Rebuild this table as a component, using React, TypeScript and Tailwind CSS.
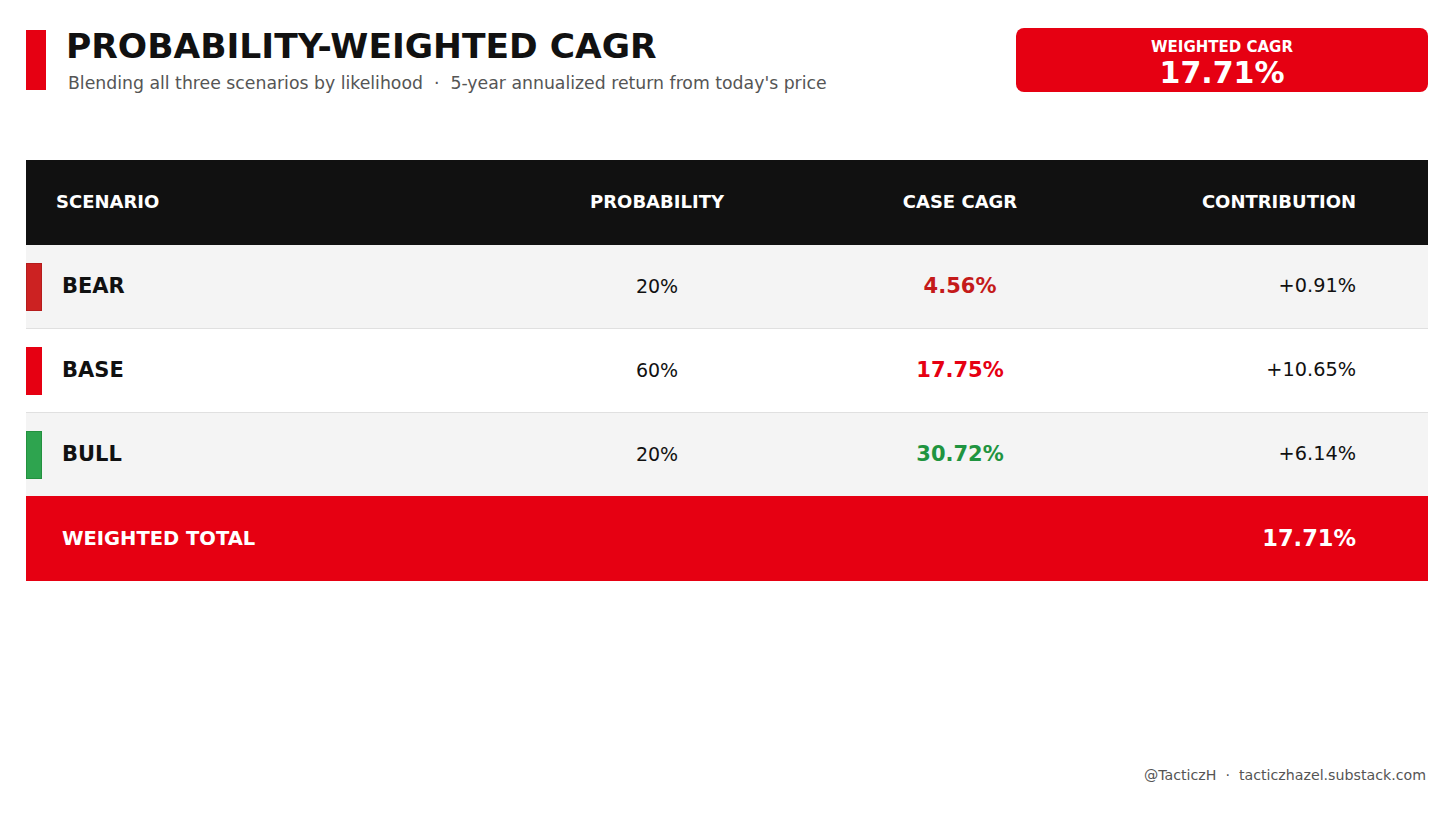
import React from "react";

const rows = [
  { name: "BEAR", prob: "20%", cagr: "4.56%", contrib: "+0.91%", bar: "bg-[#cc2222] border border-[#b51c1c]", cagrColor: "text-[#c41a1a]", bg: "bg-[#f4f4f4]" },
  { name: "BASE", prob: "60%", cagr: "17.75%", contrib: "+10.65%", bar: "bg-[#e60012]", cagrColor: "text-[#e60012]", bg: "bg-white" },
  { name: "BULL", prob: "20%", cagr: "30.72%", contrib: "+6.14%", bar: "bg-[#2ea44f] border border-[#23913f]", cagrColor: "text-[#1f9440]", bg: "bg-[#f4f4f4]" },
];

export default function App() {
  return (
    <div className="h-screen w-full bg-white flex flex-col pl-[26px] pr-[28px] pt-[28px] pb-[30px] font-['DejaVu_Sans',sans-serif]">
      {/* Title block */}
      <div className="flex items-start h-[64px]">
        <div className="w-[20px] h-[60px] bg-[#e60012] mt-[2px]" />
        <div className="ml-[20px] mt-[-2px] flex flex-col">
          <h1 className="text-[34.5px] leading-[40px] font-bold text-[#111]">PROBABILITY-WEIGHTED CAGR</h1>
          <p className="mt-[6px] ml-[2px] text-[17.3px] leading-[22px] text-[#555]">
            Blending all three scenarios by likelihood &nbsp;·&nbsp; 5-year annualized return from today's price
          </p>
        </div>
        <div className="ml-auto w-[412px] h-[64px] rounded-[8px] bg-[#e60012] flex flex-col items-center pt-[10px] text-white">
          <span className="text-[15px] leading-[18px] font-bold">WEIGHTED CAGR</span>
          <span className="text-[30px] leading-[34px] font-bold">17.71%</span>
        </div>
      </div>

      {/* Table */}
      <div className="mt-[68px] w-full">
        <div className="grid grid-cols-[479px_304px_302px_1fr] h-[85px] items-center bg-[#111] text-white text-[18px] font-bold">
          <div className="pl-[30px] pb-[2px]">SCENARIO</div>
          <div className="text-center pb-[2px]">PROBABILITY</div>
          <div className="text-center pb-[2px]">CASE CAGR</div>
          <div className="text-right pr-[72px] pb-[2px]">CONTRIBUTION</div>
        </div>
        {rows.map((r, i) => (
          <div
            key={r.name}
            className={`grid grid-cols-[479px_304px_302px_1fr] items-center ${r.bg} ${i < rows.length - 1 ? "h-[84px] border-b border-[#e0e0e0]" : "h-[83px]"}`}
          >
            <div className="flex items-center">
              <div className={`w-[16px] h-[48px] ${r.bar}`} />
              <span className="ml-[20px] text-[21px] font-bold text-[#111]">{r.name}</span>
            </div>
            <div className="text-center text-[19px] text-[#111]">{r.prob}</div>
            <div className={`text-center text-[21px] font-bold ${r.cagrColor}`}>{r.cagr}</div>
            <div className="text-right pr-[72px] text-[19.3px] text-[#111]">{r.contrib}</div>
          </div>
        ))}
        <div className="flex items-center justify-between h-[85px] bg-[#e60012] text-white font-bold">
          <span className="pl-[36px] text-[19.5px]">WEIGHTED TOTAL</span>
          <span className="pr-[72px] text-[22.5px]">17.71%</span>
        </div>
      </div>

      {/* Footer */}
      <div className="mt-auto text-right text-[14.2px] text-[#555] pr-[2px]">
        @TacticzH &nbsp;·&nbsp; tacticzhazel.substack.com
      </div>
    </div>
  );
}
